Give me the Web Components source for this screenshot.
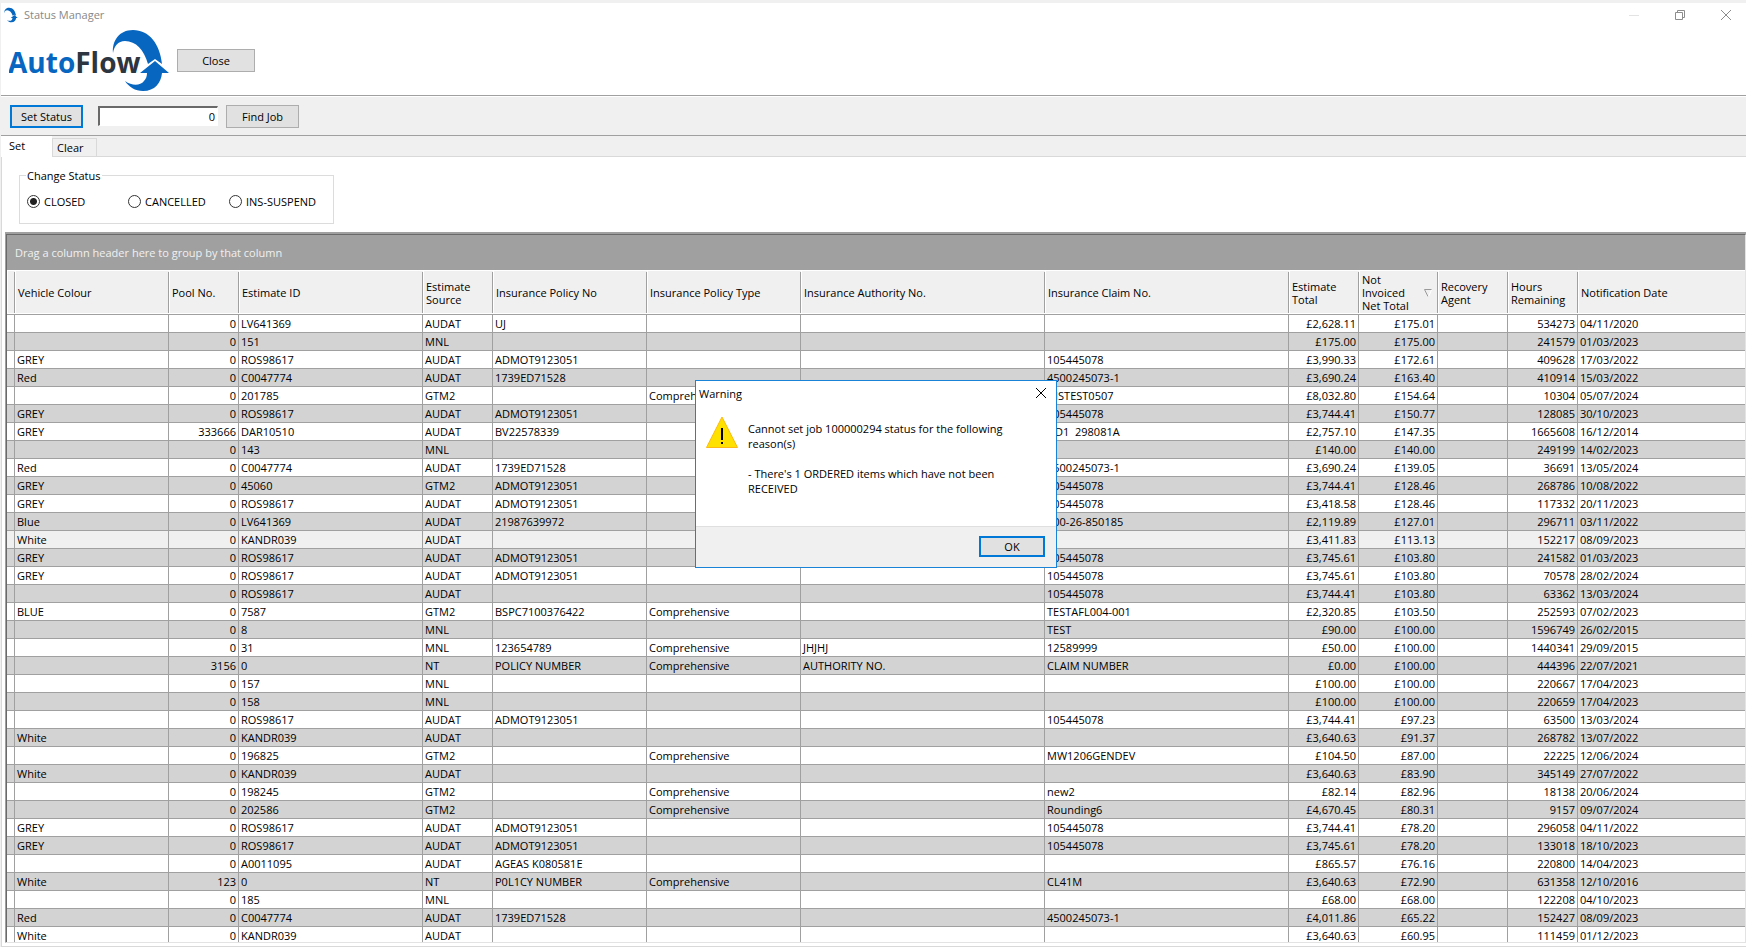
<!DOCTYPE html>
<html lang="en">
<head>
<meta charset="utf-8">
<title>Status Manager</title>
<style>
  html, body { height: 100%; }
  body {
    margin: 0;
    overflow: hidden;
    background: #f0f0f0;
    color: #000;
    font: 11px/15px "Open Sans", "Noto Sans", sans-serif;
  }
</style>
</head>
<body>
<status-window></status-window>

<script>
const define = (name, html, setup) => {
  const template = document.createElement('template');
  template.innerHTML = '<style>:host, * { box-sizing: border-box; }</style>' + html;
  customElements.define(name, class extends HTMLElement {
    constructor() {
      super();
      this.attachShadow({ mode: 'open' }).append(template.content.cloneNode(true));
    }
    connectedCallback() {
      if (setup) setup(this, this.shadowRoot);
    }
  });
};

const SWOOSH = `
  <path fill="#0766bf" d="M113 53C112 41 119 30 133 30C149 30 160 44 162 64L155 59L148 64C144 50 136 41 125 41C118 41 114 46 113 53Z"/>
  <path fill="#0766bf" d="M155 61L169 73H162C161 83 155 91 143 91C135 91 129 87 125 81C132 86 140 86 144 81C146 79 147 76 147 73H140Z"/>`;

/* Push button; variants: default (blue frame), small */
define('push-button', `
  <style>
    :host { display: block; }
    button {
      display: block; width: 100%; height: 23px; padding: 0;
      font: inherit; color: #000; background: #e1e1e1;
      border: 1px solid #adadad; border-radius: 0;
    }
    :host([default]) button { border: 2px solid #0078d7; }
    :host([small]) button { height: 21px; }
  </style>
  <button type="button"><slot></slot></button>
`);

define('swoosh-mark', `
  <style>:host { display: block; } svg { display: block; width: 100%; height: 100%; }</style>
  <svg viewBox="112 29 58 63" aria-hidden="true">${SWOOSH}</svg>
`);

define('title-bar', `
  <style>
    :host { display: flex; align-items: center; height: 23px; padding: 0 12px 0 3px; color: #888; }
    swoosh-mark { width: 14px; height: 16px; margin-right: 6px; }
    h1 { flex: 1; margin: 0; font: inherit; }
    button { width: 16px; height: 16px; margin-left: 30px; padding: 0; border: 0; background: none; }
    svg { display: block; width: 16px; height: 16px; fill: none; stroke: #8c8c8c; }
  </style>
  <swoosh-mark></swoosh-mark>
  <h1>Status Manager</h1>
  <button type="button" aria-label="Minimise" disabled><svg viewBox="0 0 16 16"><path stroke="#e3e3e3" d="M3 8.500H13"/></svg></button>
  <button type="button" aria-label="Restore"><svg viewBox="0 0 16 16"><path d="M3.500 5.500h7v7h-7zM5.500 5.500v-2h7v7h-2"/></svg></button>
  <button type="button" aria-label="Close window"><svg viewBox="0 0 16 16"><path d="M3 3L13 13M13 3L3 13"/></svg></button>
`);

define('brand-bar', `
  <style>
    :host { display: flex; align-items: flex-start; gap: 7px; height: 69px; padding: 1px 0 0 8px; }
    svg { display: block; width: 161px; height: 66px; }
    text { font: bold 28px "Open Sans", sans-serif; }
    push-button { width: 78px; margin-top: 22px; }
  </style>
  <svg viewBox="9 27 161 66" role="img" aria-label="AutoFlow">
    ${SWOOSH}
    <text x="8" y="73" fill="#0766bf">Auto<tspan fill="#2d3640">Flow</tspan></text>
  </svg>
  <push-button>Close</push-button>
`);

define('job-bar', `
  <style>
    :host {
      display: flex; align-items: center; height: 41px; padding: 1px 0 0 9px;
      background: #f0f0f0; border-top: 1px solid #a0a0a0; border-bottom: 1px solid #a0a0a0;
      box-shadow: inset 0 1px #fff;
    }
    push-button { width: 73px; }
    input {
      width: 120px; height: 20px; margin: 0 8px 0 15px; padding: 0 2px; text-align: right;
      font: inherit; border: 1px solid #fff; border-top: 2px solid #696969; border-left: 2px solid #696969;
      border-radius: 0; background: #fff; outline: 0;
    }
  </style>
  <push-button default>Set Status</push-button>
  <input type="text" value="0" aria-label="Job number">
  <push-button>Find Job</push-button>
`);

define('tab-strip', `
  <style>
    :host { display: flex; align-items: flex-end; height: 21px; background: #f0f0f0; box-shadow: inset 0 -1px #d9d9d9; }
    button { margin: 0; padding: 0; font: inherit; color: #000; text-align: left; border: 0; border-radius: 0; }
    .on { width: 51px; height: 21px; padding: 0 0 2px 8px; background: #fff; }
    .off { width: 45px; height: 19px; padding-left: 4px; background: #f0f0f0; border: 1px solid #d9d9d9; }
  </style>
  <button type="button" class="on" role="tab" aria-selected="true">Set</button>
  <button type="button" class="off" role="tab" aria-selected="false">Clear</button>
`);

define('status-choice', `
  <style>
    :host { display: block; padding: 11px 0 8px 17px; }
    fieldset { display: grid; grid-template-columns: 101px 101px 1fr; align-items: start; width: 315px; height: 56px; margin: 0; padding: 11px 0 0 7px; border: 1px solid #dcdcdc; }
    legend { margin-left: -1px; padding: 0 1px; }
    label { display: flex; align-items: center; gap: 4px; }
    input {
      appearance: none; width: 13px; height: 13px; margin: 0; border: 1px solid #333;
      border-radius: 50%; background: #fff;
    }
    input:checked { background: radial-gradient(circle, #222 3px, #fff 4px); }
  </style>
  <fieldset>
    <legend>Change Status</legend>
    <label><input type="radio" name="status" checked>CLOSED</label>
    <label><input type="radio" name="status">CANCELLED</label>
    <label><input type="radio" name="status">INS-SUSPEND</label>
  </fieldset>
`);

const COLUMNS = [
  ['', 8], ['Vehicle Colour', 154], ['Pool No.', 70, 'n'], ['Estimate ID', 184], ['Estimate Source', 70],
  ['Insurance Policy No', 154], ['Insurance Policy Type', 154], ['Insurance Authority No.', 244],
  ['Insurance Claim No.', 244], ['Estimate Total', 70, 'n'], ['Not Invoiced Net Total', 79, 'n', 'sort'],
  ['Recovery Agent', 70], ['Hours Remaining', 70, 'n'], ['Notification Date', 0]
];
/* colour|pool|id|source|policy|type|authority|claim|total|net|hours|date */
const ROWS = `|0|LV641369|AUDAT|UJ||||£2,628.11|£175.01|534273|04/11/2020
|0|151|MNL|||||£175.00|£175.00|241579|01/03/2023
GREY|0|ROS98617|AUDAT|ADMOT9123051|||105445078|£3,990.33|£172.61|409628|17/03/2022
Red|0|C0047774|AUDAT|1739ED71528|||4500245073-1|£3,690.24|£163.40|410914|15/03/2022
|0|201785|GTM2||Comprehensive||GISTEST0507|£8,032.80|£154.64|10304|05/07/2024
GREY|0|ROS98617|AUDAT|ADMOT9123051|||105445078|£3,744.41|£150.77|128085|30/10/2023
GREY|333666|DAR10510|AUDAT|BV22578339|||GD1  298081A|£2,757.10|£147.35|1665608|16/12/2014
|0|143|MNL|||||£140.00|£140.00|249199|14/02/2023
Red|0|C0047774|AUDAT|1739ED71528|||4500245073-1|£3,690.24|£139.05|36691|13/05/2024
GREY|0|45060|GTM2|ADMOT9123051|||105445078|£3,744.41|£128.46|268786|10/08/2022
GREY|0|ROS98617|AUDAT|ADMOT9123051|||105445078|£3,418.58|£128.46|117332|20/11/2023
Blue|0|LV641369|AUDAT|21987639972|||000-26-850185|£2,119.89|£127.01|296711|03/11/2022
White|0|KANDR039|AUDAT|||||£3,411.83|£113.13|152217|08/09/2023
GREY|0|ROS98617|AUDAT|ADMOT9123051|||105445078|£3,745.61|£103.80|241582|01/03/2023
GREY|0|ROS98617|AUDAT|ADMOT9123051|||105445078|£3,745.61|£103.80|70578|28/02/2024
|0|ROS98617|AUDAT||||105445078|£3,744.41|£103.80|63362|13/03/2024
BLUE|0|7587|GTM2|BSPC7100376422|Comprehensive||TESTAFL004-001|£2,320.85|£103.50|252593|07/02/2023
|0|8|MNL||||TEST|£90.00|£100.00|1596749|26/02/2015
|0|31|MNL|123654789|Comprehensive|JHJHJ|12589999|£50.00|£100.00|1440341|29/09/2015
|3156|0|NT|POLICY NUMBER|Comprehensive|AUTHORITY NO.|CLAIM NUMBER|£0.00|£100.00|444396|22/07/2021
|0|157|MNL|||||£100.00|£100.00|220667|17/04/2023
|0|158|MNL|||||£100.00|£100.00|220659|17/04/2023
|0|ROS98617|AUDAT|ADMOT9123051|||105445078|£3,744.41|£97.23|63500|13/03/2024
White|0|KANDR039|AUDAT|||||£3,640.63|£91.37|268782|13/07/2022
|0|196825|GTM2||Comprehensive||MW1206GENDEV|£104.50|£87.00|22225|12/06/2024
White|0|KANDR039|AUDAT|||||£3,640.63|£83.90|345149|27/07/2022
|0|198245|GTM2||Comprehensive||new2|£82.14|£82.96|18138|20/06/2024
|0|202586|GTM2||Comprehensive||Rounding6|£4,670.45|£80.31|9157|09/07/2024
GREY|0|ROS98617|AUDAT|ADMOT9123051|||105445078|£3,744.41|£78.20|296058|04/11/2022
GREY|0|ROS98617|AUDAT|ADMOT9123051|||105445078|£3,745.61|£78.20|133018|18/10/2023
|0|A0011095|AUDAT|AGEAS K080581E||||£865.57|£76.16|220800|14/04/2023
White|123|0|NT|P0L1CY NUMBER|Comprehensive||CL41M|£3,640.63|£72.90|631358|12/10/2016
|0|185|MNL|||||£68.00|£68.00|122208|04/10/2023
Red|0|C0047774|AUDAT|1739ED71528|||4500245073-1|£4,011.86|£65.22|152427|08/09/2023
White|0|KANDR039|AUDAT|||||£3,640.63|£60.95|111459|01/12/2023`;

define('job-grid', `
  <style>
    :host {
      display: block; overflow: hidden; background: #fff;
      border: solid #a0a0a0; border-width: 2px 0 0 1px;
    }
    .frame { height: 100%; border-top: 1px solid #696969; border-left: 1px solid #696969; border-right: 1px solid #e3e3e3; }
    .group { height: 35px; padding: 10px 8px; color: #f0f0f0; background: #a0a0a0; }
    table { width: 100%; table-layout: fixed; border-spacing: 0; }
    th {
      height: 45px; padding: 0 2px 0 3px; font-weight: normal; text-align: left; line-height: 13px;
      border-top: 1px solid #fff; border-bottom: 1px solid #a0a0a0;
      background: linear-gradient(#a0a0a0, #a0a0a0) right 1px / 1px 41px no-repeat,
                  linear-gradient(#fff, #fff) left / 1px 100% no-repeat,
                  linear-gradient(#fff, #fff) bottom / 100% 1px no-repeat, #f0f0f0;
    }
    th:last-child { background: linear-gradient(#fff, #fff) left / 1px 100% no-repeat, linear-gradient(#fff, #fff) bottom / 100% 1px no-repeat, #f0f0f0; }
    .sort { display: grid; grid-template-columns: 1fr 8px; gap: 8px; align-items: center; padding-right: 4px; }
    .sort svg { display: block; width: 8px; height: 8px; fill: none; }
    td {
      height: 18px; padding: 0 2px; line-height: 17px; overflow: hidden; white-space: pre;
      border-right: 1px solid #a0a0a0; border-bottom: 1px solid #a0a0a0;
    }
    td:last-child { border-right: 0; }
    .n { text-align: right; }
    tr:nth-child(even) td { background: #d3d3d3; }
    tr.current td { background: #f0f0f0; }
  </style>
  <div class="frame">
    <div class="group">Drag a column header here to group by that column</div>
    <table><colgroup></colgroup><thead><tr></tr></thead><tbody></tbody></table>
  </div>
`, (host, root) => {
  const [cols, head, body] = ['colgroup', 'thead tr', 'tbody'].map(s => root.querySelector(s));
  for (const [title, width, , sort] of COLUMNS) {
    const col = document.createElement('col');
    if (width) col.style.width = width + 'px';
    cols.append(col);
    const th = document.createElement('th');
    if (sort) {
      th.innerHTML = '<div class="sort"><span></span><svg viewBox="0 0 8 8"><path stroke="#999" d="M7.500 .500H.500L4 7.500"/><path stroke="#fff" d="M7.500 1L4.500 7.500"/></svg></div>';
      th.querySelector('span').textContent = title;
    } else th.textContent = title;
    head.append(th);
  }
  ROWS.split('\n').forEach((line, i) => {
    const cells = ['', ...line.split('|')];
    cells.splice(11, 0, '');
    const tr = body.insertRow();
    if (i === 12) tr.className = 'current';
    cells.forEach((text, c) => {
      const td = tr.insertCell();
      td.textContent = text;
      if (COLUMNS[c][2]) td.className = 'n';
    });
  });
});

define('warning-dialog', `
  <style>
    :host { position: absolute; left: 695px; top: 380px; width: 362px; }
    dialog { position: static; display: block; width: 100%; margin: 0; padding: 0; color: #000; background: #fff; border: 1px solid #1883d7; }
    header { display: flex; align-items: center; justify-content: space-between; height: 24px; padding: 0 9px 0 3px; }
    h2 { margin: 0; font: inherit; }
    .x { width: 12px; height: 12px; padding: 0; border: 0; background: none; }
    svg { display: block; }
    .body { display: flex; gap: 10px; height: 121px; padding: 11px 20px 0 10px; }
    p { margin: 5px 0 0; white-space: pre-line; }
    footer { display: flex; justify-content: flex-end; height: 41px; padding: 9px 11px 0; background: #f0f0f0; border-top: 1px solid #dfdfdf; }
    push-button { width: 66px; }
  </style>
  <dialog open aria-labelledby="t">
    <header>
      <h2 id="t">Warning</h2>
      <button type="button" class="x" aria-label="Dismiss"><svg width="12" height="12" viewBox="0 0 12 12"><path fill="none" stroke="#000" d="M1 1L11 11M11 1L1 11"/></svg></button>
    </header>
    <div class="body">
      <svg width="32" height="32" viewBox="0 0 32 32" aria-hidden="true">
        <path fill="#ffe100" stroke="#fdb813" d="M16 1L31.500 31.500H.500Z"/>
        <path d="M15 12h2v12h-2zM15 26h2v2h-2z"/>
      </svg>
      <p><slot></slot></p>
    </div>
    <footer><push-button default small>OK</push-button></footer>
  </dialog>
`);

define('status-window', `
  <style>
    :host { display: flex; flex-direction: column; height: 100vh; padding: 3px 0 0 1px; }
    .top { background: #fff; }
    main { flex: 1; min-height: 0; display: flex; flex-direction: column; padding: 0 0 3px 3px; background: #fff; border-left: 1px solid #d9d9d9; border-bottom: 1px solid #d9d9d9; }
    job-grid { flex: 1; min-height: 0; border-bottom: 1px solid #e3e3e3; }
    status-choice { margin-left: -3px; }
  </style>
  <div class="top"><title-bar></title-bar><brand-bar></brand-bar></div>
  <job-bar></job-bar>
  <tab-strip></tab-strip>
  <main>
    <status-choice></status-choice>
    <job-grid></job-grid>
  </main>
  <warning-dialog>Cannot set job 100000294 status for the following
reason(s)

- There's 1 ORDERED items which have not been
RECEIVED</warning-dialog>
`);
</script>
</body>
</html>
